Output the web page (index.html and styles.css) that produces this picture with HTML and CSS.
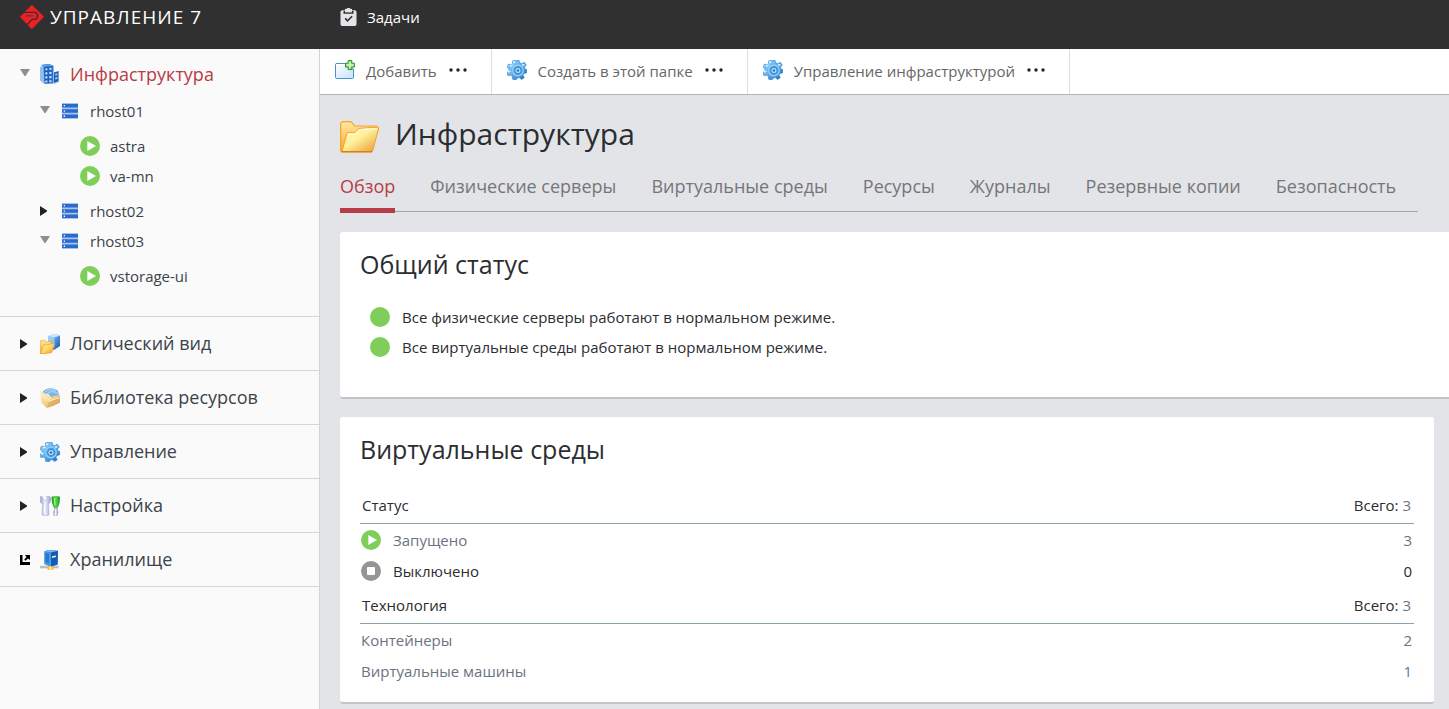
FILE: index.html
```html
<!DOCTYPE html>
<html lang="ru">
<head>
<meta charset="utf-8">
<title>Управление 7 — Инфраструктура</title>
<link rel="stylesheet" href="styles.css">
</head>
<body>
<svg class="sprite" aria-hidden="true">
  <defs>
    <linearGradient id="g-blue" x1="0" y1="0" x2="1" y2="1"><stop offset="0" stop-color="#a9dcfb"/><stop offset=".5" stop-color="#5bacec"/><stop offset="1" stop-color="#1668bd"/></linearGradient>
    <linearGradient id="g-tower" x1="0" y1="0" x2="1" y2="0"><stop offset="0" stop-color="#5ba3e8"/><stop offset=".35" stop-color="#1556b0"/><stop offset="1" stop-color="#2f78d2"/></linearGradient>
    <linearGradient id="g-box" x1="0" y1="0" x2="1" y2="1"><stop offset="0" stop-color="#9bd0f5"/><stop offset="1" stop-color="#0b55b8"/></linearGradient>
    <linearGradient id="g-gold" x1="0" y1="0" x2="1" y2="1"><stop offset="0" stop-color="#fff3b0"/><stop offset=".5" stop-color="#ffd668"/><stop offset="1" stop-color="#ee9420"/></linearGradient>
    <linearGradient id="g-back" x1="0" y1="0" x2="0" y2="1"><stop offset="0" stop-color="#ffe9a3"/><stop offset="1" stop-color="#f9a824"/></linearGradient>
    <linearGradient id="g-front" x1="0" y1="0" x2="1" y2="1"><stop offset="0" stop-color="#fffbd2"/><stop offset=".45" stop-color="#fff09a"/><stop offset="1" stop-color="#e8962f"/></linearGradient>
    <linearGradient id="g-pane" x1="0" y1="0" x2="1" y2="1"><stop offset="0" stop-color="#ffffff"/><stop offset="1" stop-color="#c3e2fa"/></linearGradient>
    <linearGradient id="g-steel" x1="0" y1="0" x2="1" y2="0"><stop offset="0" stop-color="#9a9bd0"/><stop offset=".45" stop-color="#f3f3fd"/><stop offset="1" stop-color="#9696cb"/></linearGradient>
    <linearGradient id="g-green" x1="0" y1="0" x2="1" y2="0"><stop offset="0" stop-color="#16961f"/><stop offset=".5" stop-color="#62da4f"/><stop offset="1" stop-color="#118c1b"/></linearGradient>
    <linearGradient id="g-tan" x1="0" y1="0" x2="1" y2="1"><stop offset="0" stop-color="#fff0c8"/><stop offset=".55" stop-color="#f5cf83"/><stop offset="1" stop-color="#b47a2d"/></linearGradient>
  </defs>

  <symbol id="i-logo" viewBox="0 0 24 24">
    <path d="M11.800 1.300 22.600 11.700 11.800 22.700 1.300 11.700Z" fill="#ed2024" stroke="#ed2024" stroke-width="2" stroke-linejoin="round"/>
    <path d="M0 9.500 4.500 7.400H14.800A3.600 3.600 0 0 1 14.800 14.400H12.300L6.600 20" fill="none" stroke="#303030" stroke-width="1.300"/>
    <path d="M5.500 10.900H13.300" fill="none" stroke="#303030" stroke-width=".8"/>
  </symbol>
  <symbol id="i-task" viewBox="0 0 16 18">
    <path d="M1.800 2.200H4.300V1.700A1.200 1.200 0 0 1 5.500.7H6.700V0H9.300V.7H10.500A1.200 1.200 0 0 1 11.700 1.700V2.200H14.200A1.800 1.800 0 0 1 16 4V16.200A1.800 1.800 0 0 1 14.200 18H1.800A1.800 1.800 0 0 1 0 16.200V4A1.800 1.800 0 0 1 1.800 2.200Z" fill="#e4e5ea"/>
    <path d="M3.800 2.800V5H12.200V2.800M4.700 10.400 7 12.800 11.600 8.300" fill="none" stroke="#303030" stroke-width="1.600"/>
    <path d="M4.600 1.600H11.400V4.200H4.600Z" fill="#e4e5ea"/>
  </symbol>
  <symbol id="i-down" viewBox="0 0 10 8"><path d="M0 0H10L5.500 7H4.500Z" fill="#8e8e8e"/></symbol>
  <symbol id="i-right" viewBox="0 0 7 10"><path d="M0 0 7 4.500V5.500L0 10Z" fill="#222"/></symbol>
  <symbol id="i-ext" viewBox="0 0 10 10">
    <path d="M0 0H2.500V7H10V10H0Z" fill="#000"/><path d="M5 0H10V5L8 3.500 5.600 5.800 4.200 4.400 6.500 2Z" fill="#000"/>
  </symbol>
  <symbol id="i-play" viewBox="0 0 20 20"><circle cx="10" cy="10" r="10" fill="#7fce5a"/><path d="M7.300 5V15L16 10Z" fill="#fff"/></symbol>
  <symbol id="i-stop" viewBox="0 0 20 20"><circle cx="10" cy="10" r="10" fill="#959595"/><rect x="6" y="6" width="8" height="8" rx="1" fill="#fff"/></symbol>
  <symbol id="i-dot" viewBox="0 0 20 20"><circle cx="10" cy="10" r="10" fill="#7fce5a"/></symbol>
  <symbol id="i-host" viewBox="0 0 16 16">
    <path d="M0 0H16V16H0Z" fill="#a9c4ec"/>
    <path d="M0 1H16V4.500H0ZM0 6.200H16V9.800H0ZM0 11.500H16V15H0Z" fill="#2b6bcb"/>
    <path d="M1.700 2H3V3.300H1.700ZM1.700 7.400H3V8.700H1.700ZM1.700 12.600H3V13.900H1.700Z" fill="#fff"/>
  </symbol>
  <symbol id="i-infra" viewBox="0 0 20 20">
    <path d="M0 3 5 1 5 19 0 16.500Z" fill="#8fc0ee"/>
    <path d="M1 1 9 0 13.500 1.800V19.500L4.500 20 3.500 2.500Z" fill="url(#g-tower)"/>
    <path d="M1 1 9 0 13 1.800 4 3Z" fill="#5b9fe4"/>
    <path d="M5.300 4.400 7.400 4.200V6.300H5.300ZM9.300 4 11.500 3.800V5.800H9.300ZM5.300 8.300H7.400V10.400H5.300ZM9.300 8H11.500V10.100H9.300ZM5.300 12.300H7.400V14.400H5.300ZM9.300 12H11.500V14.200H9.300ZM5.300 16.400H7.400V18.400H5.300ZM9.300 16.200H11.500V18.200H9.300Z" fill="#c4e4ff"/>
    <path d="M14 8.500 18.600 7V17.500L14 19Z" fill="#1d5eb8"/>
    <path d="M15.200 10 17.400 9.300V11.200L15.200 11.800ZM15.200 13.500 17.400 12.900V14.900L15.200 15.500Z" fill="#9fd0f8"/>
    <path d="M1 17.500 4.500 20H14L19 17.500" fill="none" stroke="#9ec7eb" stroke-width=".8"/>
  </symbol>
  <symbol id="i-logical" viewBox="0 0 20 20">
    <path d="M8 2 14 0 20 1.500V12L14 16 8 13Z" fill="url(#g-box)"/>
    <path d="M8 2 14 0 20 1.500 14.500 3.500Z" fill="#c9e7fb"/>
    <path d="M8 2 14.500 3.500V14L8 12Z" fill="#a7d3f4" fill-opacity=".75"/>
    <path d="M0 7 4.500 6 6 8 11 7.300V18.500L.5 20Z" fill="url(#g-back)" stroke="#f29b1b" stroke-width=".6"/>
    <path d="M3.500 11.200 14.700 9.300 11.800 18.500.5 19.800Z" fill="url(#g-gold)" stroke="#ef9a23" stroke-width=".6"/>
  </symbol>
  <symbol id="i-library" viewBox="0 0 20 20">
    <path d="M2 5C4 0 14-1.500 18 3L20 10 8 13Z" fill="#7db5e8"/>
    <path d="M4 5C7 1 13 1 16 3M7 6C9 3 14 3 18 5.500" fill="none" stroke="#c9e6fc" stroke-width=".8"/>
    <path d="M0 3C3 3 3.500 6 5.500 6L7.500 5 11 9 19.500 6.500 20 14.500 14 17.500 7 20 1.500 15Z" fill="url(#g-tan)"/>
    <path d="M1 6 7 13M4 6 9 12M7.500 6 11 11" stroke="#fff8df" stroke-width="1"/>
    <path d="M8 13.500 19.500 9.500V14.500L8 19.500Z" fill="#ddb062" fill-opacity=".65"/>
    <path d="M8 13.500 19.500 9.500" stroke="#fff4cb" stroke-width="1"/>
  </symbol>
  <symbol id="i-gear" viewBox="0 0 20 20">
    <g fill="url(#g-blue)" stroke="#2f80c9" stroke-width=".6">
      <path d="M8.200 0H12L12.600 2.800 14.800 3.700 17.200 2.200 19.300 4.900 17.400 7 18 9 20 9.800 19.600 13 17 13.400 16 15.300 17.300 17.700 14.500 19.600 12.300 17.600 10.400 18.100 8.800 20 5.600 19.200 5.300 16.500 3.700 15.100 1 15.700 0 12.500 2.200 10.900 2.100 8.900 0 7.200 1.400 4.200 4.200 4.600 5.800 3.100 5.500 1Z"/>
    </g>
    <path d="M3 5.400 5.500 5.600M6.500 1.500 7.500 3M1.200 12 3.500 11.200M15 5 17.500 4.800" stroke="#e4f7ff" stroke-width="1.500"/>
    <circle cx="11" cy="10.500" r="5.300" fill="#4e9ee2" stroke="#94d5fa" stroke-width="1.200"/>
    <circle cx="11" cy="10.500" r="3.100" fill="#bfe8ff" stroke="#2b7cca" stroke-width=".9"/>
    <circle cx="11" cy="10.500" r="1.300" fill="#2570bd"/>
  </symbol>
  <symbol id="i-tools" viewBox="0 0 20 20">
    <path d="M.5 0 2.700 1 3.500 4 6 4.500 7 3 6.500.5 9.500 0 11 3 10 6.500 8.500 8.500 9 19Q5.500 21 2 19L2.500 8.500.2 6Z" fill="url(#g-steel)" stroke="#a7a8d2" stroke-width=".5"/>
    <path d="M4.500 9V17" stroke="#fff" stroke-width="1"/>
    <path d="M11.500.8Q15.800-.8 20 .8L19.500 7 17.500 12.500H14.200L12 7Z" fill="url(#g-green)"/>
    <path d="M14.300 2 15 9" stroke="#b5ff9c" stroke-width="1"/>
    <path d="M14.800 12.500H17L18 16 17 20H14L13.500 16Z" fill="url(#g-steel)" stroke="#8f90bd" stroke-width=".4"/>
  </symbol>
  <symbol id="i-storage" viewBox="0 0 20 20">
    <path d="M0 15.800H18.500V18.300H0Z" fill="#b9b9b7"/><path d="M0 15.800H18.500" stroke="#e2e2e0"/>
    <path d="M4.500 1.500 8 0 18 .8 17.800 14.500 11 16.800 4.500 14Z" fill="#0f5cbb"/>
    <path d="M4.500 1.500 8 0 18 .8 11 2.500Z" fill="#79b8ed"/>
    <path d="M4.500 1.500 11 2.500V16.500L4.500 14Z" fill="#4a9be5"/>
    <path d="M5.500 3 9 3.600V13.500L5.500 12Z" fill="#2479d3"/>
    <path d="M12 6.300 16 5.400V6.900L12 7.900Z" fill="#fff19a"/>
    <path d="M7.500 16.500H13.500V20H7.500Z" fill="#f5bd37"/><path d="M9.500 16.500H11.500V20H9.500Z" fill="#fff0a0"/>
  </symbol>
  <symbol id="i-add" viewBox="0 0 20 20">
    <path d="M1 3.500H10L16 9H18.500V17.300Q18.500 18.500 17.300 18.500H1.700Q.5 18.500.5 17.300V4.500Z" fill="url(#g-pane)" stroke="#4d90d0" stroke-width="1"/>
    <path d="M1.500 4.500H10" stroke="#fff"/>
    <path d="M13.200.5H16.800V3.200H19.600V7H16.800V9.600H13.200V7H10.500V3.200H13.200Z" fill="#8fdc76" stroke="#2c9130" stroke-width="1"/>
    <path d="M15 1.500V8.500M11.500 5H18.600" stroke="#d6f8c6" stroke-width="1.300"/>
  </symbol>
  <symbol id="i-folder" viewBox="0 0 40 32">
    <path d="M.7 3Q.7 1 2.700.7H10Q11.700.7 12.800 2.500L14.500 5H36Q38 5.200 37.800 7L31 30.500H1.500Q.6 30.500.6 29Z" fill="url(#g-back)" stroke="#f6a42e" stroke-width="1.200"/>
    <path d="M7.200 11.700H15L18 8.200Q18.700 7.300 20 7.300L38 6Q39 6.100 38.500 8L32.700 29.800Q32.400 31 31 31H1.800Z" fill="url(#g-front)" stroke="#f5a02b" stroke-width="1"/>
    <path d="M8.200 13H15.700L19 9.200Q19.500 8.600 20.500 8.600L36.500 7.600" fill="none" stroke="#fffbe0" stroke-width="1.200"/>
    <path d="M1.200 30.700H32" stroke="#d97b14" stroke-width="1.300"/>
  </symbol>
  <symbol id="i-more" viewBox="0 0 18 4"><circle cx="2" cy="2" r="1.700"/><circle cx="9" cy="2" r="1.700"/><circle cx="16" cy="2" r="1.700"/></symbol>
</svg>

<header class="topbar">
  <a class="brand" href="#"><svg class="brand-mark"><use href="#i-logo"/></svg><span>УПРАВЛЕНИЕ 7</span></a>
  <a class="tasks" href="#"><svg class="tasks-icon"><use href="#i-task"/></svg><span>Задачи</span></a>
</header>

<div class="shell">
  <nav class="sidebar" aria-label="Разделы">
    <div class="section section-open">
      <div class="node root">
        <button class="toggle open" aria-label="Свернуть"><svg><use href="#i-down"/></svg></button>
        <a class="current" href="#"><svg class="icon"><use href="#i-infra"/></svg>Инфраструктура</a>
      </div>
      <ul class="hosts">
        <li>
          <div class="node"><button class="toggle open" aria-label="Свернуть"><svg><use href="#i-down"/></svg></button><a href="#"><svg class="icon host"><use href="#i-host"/></svg>rhost01</a></div>
          <ul class="guests">
            <li class="node"><a href="#"><svg class="icon"><use href="#i-play"/></svg>astra</a></li>
            <li class="node"><a href="#"><svg class="icon"><use href="#i-play"/></svg>va-mn</a></li>
          </ul>
        </li>
        <li>
          <div class="node"><button class="toggle" aria-label="Развернуть"><svg><use href="#i-right"/></svg></button><a href="#"><svg class="icon host"><use href="#i-host"/></svg>rhost02</a></div>
        </li>
        <li>
          <div class="node"><button class="toggle open" aria-label="Свернуть"><svg><use href="#i-down"/></svg></button><a href="#"><svg class="icon host"><use href="#i-host"/></svg>rhost03</a></div>
          <ul class="guests">
            <li class="node"><a href="#"><svg class="icon"><use href="#i-play"/></svg>vstorage-ui</a></li>
          </ul>
        </li>
      </ul>
    </div>
    <div class="section node"><button class="toggle" aria-label="Развернуть"><svg><use href="#i-right"/></svg></button><a href="#"><svg class="icon"><use href="#i-logical"/></svg>Логический вид</a></div>
    <div class="section node"><button class="toggle" aria-label="Развернуть"><svg><use href="#i-right"/></svg></button><a href="#"><svg class="icon"><use href="#i-library"/></svg>Библиотека ресурсов</a></div>
    <div class="section node"><button class="toggle" aria-label="Развернуть"><svg><use href="#i-right"/></svg></button><a href="#"><svg class="icon"><use href="#i-gear"/></svg>Управление</a></div>
    <div class="section node"><button class="toggle" aria-label="Развернуть"><svg><use href="#i-right"/></svg></button><a href="#"><svg class="icon"><use href="#i-tools"/></svg>Настройка</a></div>
    <div class="section node"><button class="toggle external" aria-label="Открыть в новом окне"><svg><use href="#i-ext"/></svg></button><a href="#"><svg class="icon"><use href="#i-storage"/></svg>Хранилище</a></div>
  </nav>

  <main class="main">
    <div class="toolbar">
      <button class="tool"><svg class="icon"><use href="#i-add"/></svg><span>Добавить</span><svg class="more"><use href="#i-more"/></svg></button>
      <button class="tool"><svg class="icon"><use href="#i-gear"/></svg><span>Создать в этой папке</span><svg class="more"><use href="#i-more"/></svg></button>
      <button class="tool"><svg class="icon"><use href="#i-gear"/></svg><span>Управление инфраструктурой</span><svg class="more"><use href="#i-more"/></svg></button>
    </div>

    <div class="content">
      <h1 class="title"><svg class="folder"><use href="#i-folder"/></svg>Инфраструктура</h1>
      <nav class="tabs" aria-label="Вкладки">
        <a class="tab active" href="#">Обзор</a>
        <a class="tab" href="#">Физические серверы</a>
        <a class="tab" href="#">Виртуальные среды</a>
        <a class="tab" href="#">Ресурсы</a>
        <a class="tab" href="#">Журналы</a>
        <a class="tab" href="#">Резервные копии</a>
        <a class="tab" href="#">Безопасность</a>
      </nav>

      <section class="card card-status">
        <h2>Общий статус</h2>
        <ul class="status">
          <li><svg class="icon"><use href="#i-dot"/></svg>Все физические серверы работают в нормальном режиме.</li>
          <li><svg class="icon"><use href="#i-dot"/></svg>Все виртуальные среды работают в нормальном режиме.</li>
        </ul>
      </section>

      <section class="card card-ve">
        <h2>Виртуальные среды</h2>
        <table class="stats">
          <thead><tr><th scope="col">Статус</th><th scope="col">Всего: <a href="#">3</a></th></tr></thead>
          <tbody>
            <tr><td><a class="state" href="#"><svg class="icon"><use href="#i-play"/></svg>Запущено</a></td><td><a href="#">3</a></td></tr>
            <tr><td><span class="state"><svg class="icon"><use href="#i-stop"/></svg>Выключено</span></td><td>0</td></tr>
          </tbody>
        </table>
        <table class="stats">
          <thead><tr><th scope="col">Технология</th><th scope="col">Всего: <a href="#">3</a></th></tr></thead>
          <tbody>
            <tr><td><a href="#">Контейнеры</a></td><td><a href="#">2</a></td></tr>
            <tr><td><a href="#">Виртуальные машины</a></td><td><a href="#">1</a></td></tr>
          </tbody>
        </table>
      </section>
    </div>
  </main>
</div>
</body>
</html>
```
FILE: styles.css
```css
* { box-sizing: border-box; }

body {
  margin: 0;
  min-height: 100vh;
  display: flex;
  flex-direction: column;
  font: 15px/20px "Open Sans", "Noto Sans", sans-serif;
  color: #2b2d31;
  background: #e3e4e8;
}

a { color: inherit; text-decoration: none; }
ul { list-style: none; margin: 0; padding: 0; }
h1, h2 { margin: 0; font-weight: 400; }
button { font: inherit; border: 0; background: none; padding: 0; cursor: pointer; }
svg { display: block; flex: none; }
.sprite { position: absolute; width: 0; height: 0; }
.icon { width: 20px; height: 20px; }

/* Top bar */
.topbar {
  display: flex;
  align-items: flex-start;
  height: 49px;
  padding: 5px 20px 0;
  background: #303030;
  color: #fff;
}
.brand, .tasks { display: flex; align-items: center; height: 24px; }
.brand { width: 320px; gap: 6px; font-size: 19px; letter-spacing: 1px; }
.brand-mark { width: 24px; height: 24px; }
.tasks { gap: 10px; }
.tasks-icon { width: 17px; height: 18px; }

.shell { display: flex; flex: 1; }

/* Sidebar */
.sidebar {
  flex: none;
  width: 320px;
  background: #fafafa;
  border-right: 1px solid #d2d3d5;
  color: #3c434b;
}
.section {
  min-height: 54px;
  padding: 0 20px;
  border-bottom: 1px solid #d6d7d8;
  font-size: 18px;
}
.section-open { padding: 10px 20px 20px; }
.node { display: flex; align-items: center; }
.node a { display: flex; align-items: center; gap: 10px; }
.section.node a { padding-bottom: 2px; }
.section.node .icon { margin-top: 2px; }
.section-open .node { height: 30px; }
.toggle { width: 20px; height: 20px; display: flex; align-items: center; }
.toggle svg { width: 7px; height: 10px; }
.toggle.open { padding-bottom: 3px; }
.toggle.open svg { width: 10px; height: 8px; }
.toggle.external svg { width: 10px; height: 10px; }
.current { color: #b83c46; }
.hosts { margin: 7px 0 0 20px; font-size: 15px; }
.guests { padding: 5px 0 5px 40px; }
.icon.host { height: 16px; }

/* Main column */
.main { flex: 1; min-width: 0; overflow: hidden; }
.toolbar {
  display: flex;
  height: 46px;
  background: #fff;
  border-bottom: 1px solid #b3b5b7;
}
.tool {
  display: flex;
  align-items: center;
  padding: 0 24px 2px 15px;
  border-right: 1px solid #dcddde;
  color: #666;
}
.tool .icon { margin: 0 11px 2px 0; }
.more { width: 18px; height: 4px; margin: 0 0 1px 12px; fill: #222; }

.content { padding: 19px 15px 5px 20px; }
.title {
  display: flex;
  align-items: center;
  gap: 15px;
  height: 40px;
  font-size: 30px;
  line-height: 40px;
}
.folder { width: 40px; height: 32px; margin-top: 6px; }

.tabs {
  display: flex;
  gap: 35px;
  height: 58px;
  margin-right: 16px;
  border-bottom: 1px solid #a2a3a6;
  font-size: 18px;
  line-height: 24px;
  color: #75767a;
}
.tab { height: 59px; padding-top: 20px; white-space: nowrap; }
.tab.active { color: #b83c46; border-bottom: 5px solid #b83c46; }

.card {
  margin-bottom: 18px;
  padding: 14px 20px 17px;
  background: #fff;
  border-bottom: 2px solid #c3c4c7;
  border-radius: 3px;
}
.card h2 { font-size: 25px; line-height: 36px; }
.card-status { margin-top: 20px; margin-right: -20px; padding-bottom: 35px; }
.status { margin-top: 20px; padding-left: 10px; }
.status li { display: flex; align-items: center; gap: 12px; height: 30px; }

.card-ve { margin-bottom: 0; }
.stats { width: 100%; border-collapse: collapse; margin-top: 2px; }
.card h2 + .stats { margin-top: 20px; }
.stats th { height: 36px; padding: 0 3px 0 2px; font-weight: 400; text-align: left; border-bottom: 1px solid #8ba3aa; }
.stats td { height: 31px; padding: 2px 2px 0 1px; }
.stats th:last-child, .stats td:last-child { text-align: right; }
.stats a { color: #6d7281; }
.state { display: flex; align-items: center; gap: 12px; }
```
